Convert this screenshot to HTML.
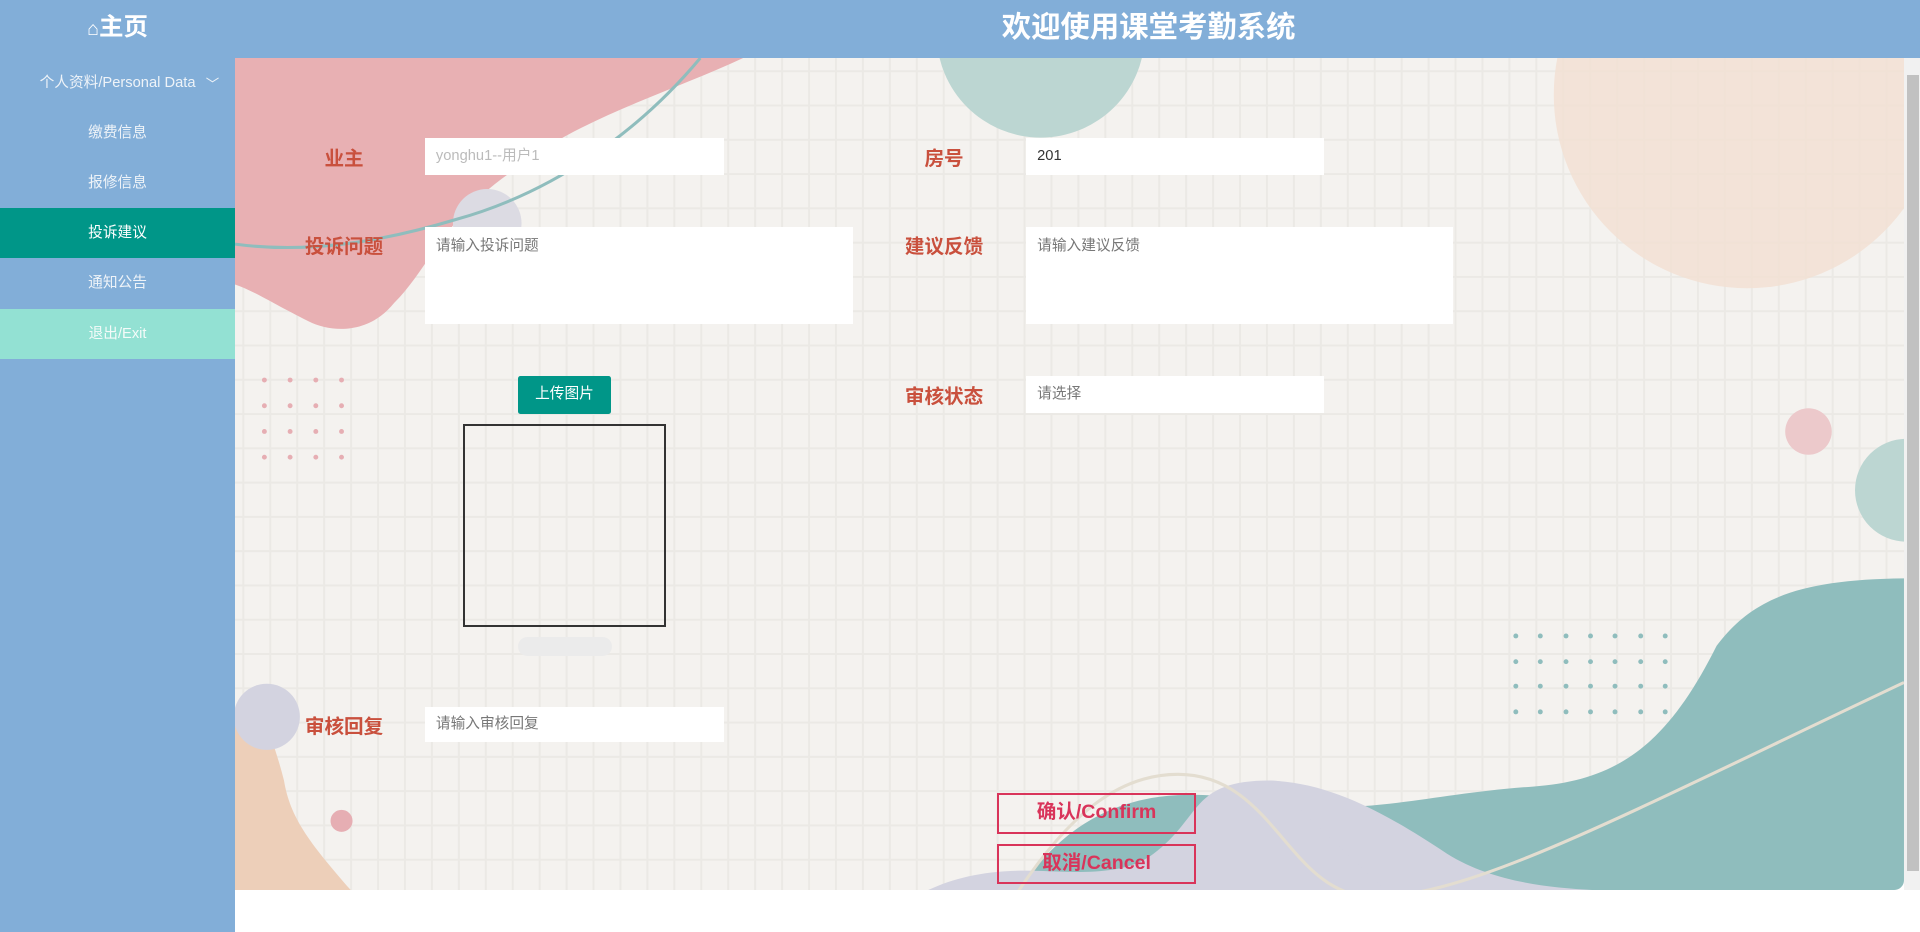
<!DOCTYPE html>
<html><head><meta charset="utf-8"><style>
html,body{margin:0;padding:0;overflow:hidden;background:#fff}
#w{zoom:1.22449;width:1568px;height:761px;position:relative;font-family:"Liberation Sans","Noto Sans CJK SC",sans-serif;overflow:hidden}
.hdr{position:absolute;left:0;top:0;width:1568px;height:47px;background:#82aed8}
.home{position:absolute;left:0;width:192px;top:0;height:47px;line-height:45px;text-align:center;color:#fff;font-weight:bold;font-size:20px}
.title{position:absolute;left:0;width:1876px;top:0;height:47px;line-height:45px;text-align:center;color:#fff;font-weight:bold;font-size:24px}
.side{position:absolute;left:0;top:47px;width:192px;height:714px;background:#82aed8}
.it{height:41px;line-height:41px;text-align:center;color:#eef3f8;font-size:12px;position:relative}
.main{position:absolute;left:192px;top:47px;width:1363px;height:680px;background-color:#f4f2ef;overflow:hidden;border-radius:0 0 8px 0;
background-image:linear-gradient(90deg,#ebe9e5 1.5px,transparent 1.5px),linear-gradient(#ebe9e5 1.5px,transparent 1.5px);background-size:22px 28px;background-position:6px 10px}
.sb{position:absolute;left:1555px;top:47px;width:13px;height:680px;background:#f1f1f1}
.sb i{position:absolute;left:2px;top:14px;width:10px;height:650px;background:#c1c1c1}
.lbl{position:absolute;color:#c9503d;font-weight:bold;font-size:16px;text-align:center;width:100px}
.in{position:absolute;background:#fff;font-size:12px;color:#777;padding-left:9px;box-sizing:border-box}
.btn{position:absolute;border:2px solid #d9345a;color:#d9345a;font-weight:bold;font-size:16px;text-align:center;box-sizing:border-box;line-height:28px}
</style></head><body><div id="w">
<div class="hdr"><div class="home"><span style="font-size:16px">⌂</span>主页</div><div class="title">欢迎使用课堂考勤系统</div></div>
<div class="side">
<div class="it">个人资料/Personal Data<span style="position:absolute;left:168px;top:2px;font-size:11px">﹀</span></div>
<div class="it">缴费信息</div><div class="it">报修信息</div>
<div class="it" style="background:#009688;color:#fff">投诉建议</div>
<div class="it">通知公告</div>
<div class="it" style="background:#93e1d3;color:#f4fbf9">退出/Exit</div>
</div>
<div class="main">
<svg width="1363" height="680" style="position:absolute;left:0;top:0">
<path d="M0 0 L415 0 C350 30 280 50 230 90 C170 130 160 170 130 200 C110 225 80 225 60 215 C30 200 15 190 0 185Z" fill="#e8b0b3"/>
<circle cx="658" cy="-20" r="85" fill="#bcd6d2"/>
<circle cx="1235" cy="30" r="158" fill="#f2e1d3" opacity=".85"/>
<circle cx="206" cy="135" r="28" fill="#dcdbe3"/>
<path d="M0 152 C60 160 120 150 180 132 C260 110 330 60 380 0" stroke="#8fbdbd" stroke-width="2.5" fill="none"/>
<path d="M0 535 L0 680 L95 680 C60 640 45 620 40 590 C35 570 28 550 20 530Z" fill="#edcfb9"/>
<circle cx="26" cy="538" r="27" fill="#d3d3e0"/>
<circle cx="87" cy="623" r="9" fill="#e6aeb3"/>
<circle cx="1285" cy="305" r="19" fill="#ecc9cb"/>
<circle cx="1365" cy="353" r="42" fill="#bcd6d2"/>
<path d="M640 680 C670 635 710 605 770 602 C820 600 850 612 890 612 C950 612 990 600 1060 595 C1130 590 1170 560 1210 480 C1240 440 1280 426 1363 425 L1363 680Z" fill="#8fbdbd"/>
<path d="M565 680 C590 668 620 662 660 664 C700 666 730 665 750 650 C790 620 780 590 845 590 C900 592 920 640 950 680Z" fill="#d3d3e0"/>
<path d="M845 590 C890 592 930 610 990 650 C1030 675 1080 678 1118 680 L940 680Z" fill="#d3d3e0"/>
<path d="M640 680 C680 620 720 585 770 585 C850 585 860 685 930 685 C1010 685 1130 620 1363 510" stroke="#e3ddd0" stroke-width="2.5" fill="none"/>
<g fill="#e6aeb3">
<circle cx="24" cy="263" r="2"/><circle cx="45" cy="263" r="2"/><circle cx="66" cy="263" r="2"/><circle cx="87" cy="263" r="2"/>
<circle cx="24" cy="284" r="2"/><circle cx="45" cy="284" r="2"/><circle cx="66" cy="284" r="2"/><circle cx="87" cy="284" r="2"/>
<circle cx="24" cy="305" r="2"/><circle cx="45" cy="305" r="2"/><circle cx="66" cy="305" r="2"/><circle cx="87" cy="305" r="2"/>
<circle cx="24" cy="326" r="2"/><circle cx="45" cy="326" r="2"/><circle cx="66" cy="326" r="2"/><circle cx="87" cy="326" r="2"/>
</g>
<g fill="#8fbdbd">
<circle cx="1046" cy="472" r="2"/><circle cx="1066" cy="472" r="2"/><circle cx="1087" cy="472" r="2"/><circle cx="1107" cy="472" r="2"/><circle cx="1127" cy="472" r="2"/><circle cx="1148" cy="472" r="2"/><circle cx="1168" cy="472" r="2"/>
<circle cx="1046" cy="513" r="2"/><circle cx="1066" cy="513" r="2"/><circle cx="1087" cy="513" r="2"/><circle cx="1107" cy="513" r="2"/><circle cx="1127" cy="513" r="2"/><circle cx="1148" cy="513" r="2"/><circle cx="1168" cy="513" r="2"/>
<circle cx="1046" cy="493" r="2"/><circle cx="1066" cy="493" r="2"/><circle cx="1087" cy="493" r="2"/><circle cx="1107" cy="493" r="2"/><circle cx="1127" cy="493" r="2"/><circle cx="1148" cy="493" r="2"/><circle cx="1168" cy="493" r="2"/>
<circle cx="1046" cy="534" r="2"/><circle cx="1066" cy="534" r="2"/><circle cx="1087" cy="534" r="2"/><circle cx="1107" cy="534" r="2"/><circle cx="1127" cy="534" r="2"/><circle cx="1148" cy="534" r="2"/><circle cx="1168" cy="534" r="2"/>
</g>
</svg>
</div>
<div class="sb"><i></i></div>
<div class="lbl" style="left:231px;top:116px">业主</div>
<div class="in" style="left:347px;top:113px;width:244px;height:30px;line-height:30px;color:#bbb">yonghu1--用户1</div>
<div class="lbl" style="left:721px;top:116px">房号</div>
<div class="in" style="left:838px;top:113px;width:243px;height:30px;line-height:30px;color:#333">201</div>
<div class="lbl" style="left:231px;top:188px">投诉问题</div>
<div class="in" style="left:347px;top:185px;width:350px;height:80px;padding-top:6px">请输入投诉问题</div>
<div class="lbl" style="left:721px;top:188px">建议反馈</div>
<div class="in" style="left:838px;top:185px;width:349px;height:80px;padding-top:6px">请输入建议反馈</div>
<div style="position:absolute;left:423px;top:307px;width:76px;height:31px;background:#009688;color:#fff;font-size:12px;text-align:center;line-height:31px;border-radius:2px">上传图片</div>
<div style="position:absolute;left:378px;top:346px;width:166px;height:166px;border:2px solid #333;box-sizing:border-box"></div>
<div style="position:absolute;left:423px;top:520px;width:77px;height:16px;background:#ebebeb;border-radius:8px"></div>
<div class="lbl" style="left:721px;top:310px">审核状态</div>
<div class="in" style="left:838px;top:307px;width:243px;height:30px;line-height:30px">请选择</div>
<div class="lbl" style="left:231px;top:580px">审核回复</div>
<div class="in" style="left:347px;top:577px;width:244px;height:29px;line-height:29px">请输入审核回复</div>
<div class="btn" style="left:814px;top:648px;width:163px;height:33px">确认/Confirm</div>
<div class="btn" style="left:814px;top:689px;width:163px;height:33px">取消/Cancel</div>
</div></body></html>
